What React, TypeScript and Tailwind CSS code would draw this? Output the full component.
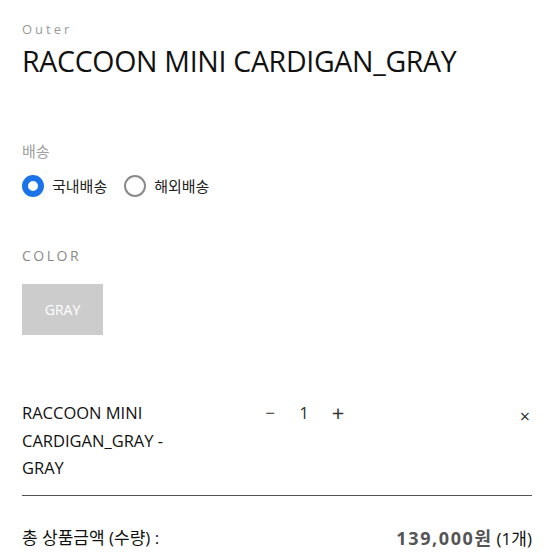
export default function App() {
  const font = { fontFamily: '"Open Sans", "Noto Sans CJK KR", sans-serif' };
  return (
    <div className="w-[554px] h-[554px] bg-white overflow-hidden pl-[22px] pr-[22px]" style={font}>
      <div className="pt-[20px] text-[13px] leading-[18px] tracking-[3px] text-[#9a9a9a]">Outer</div>
      <h1 className="mt-[6px] text-[28.5px] leading-[34px] text-[#111] tracking-[-0.3px]">RACCOON MINI CARDIGAN_GRAY</h1>

      <div className="mt-[63px] text-[15px] leading-[20px] text-[#a0a0a0]">배송</div>
      <div className="mt-[14px] flex items-center text-[15px] leading-[22px] text-[#222]">
        <label className="flex items-center gap-[8px]">
          <span className="w-[22px] h-[22px] rounded-full border-[6px] border-[#1a73e8] bg-white" />
          <span>국내배송</span>
        </label>
        <label className="ml-[17px] flex items-center gap-[8px]">
          <span className="w-[22px] h-[22px] rounded-full border-2 border-[#8a8a8a] bg-white" />
          <span>해외배송</span>
        </label>
      </div>

      <div className="mt-[49px] text-[14px] leading-[20px] tracking-[2.5px] text-[#8a8a8a]">COLOR</div>
      <div className="mt-[18px] w-[81px] h-[51px] bg-[#cccccc] flex items-center justify-center text-[14px] text-white">
        GRAY
      </div>

      <div className="mt-[64px] flex items-start pb-[13px] border-b border-[#555]">
        <div className="w-[175px] text-[16.5px] leading-[27.5px] text-[#111]">
          RACCOON MINI CARDIGAN_GRAY - GRAY
        </div>
        <div className="ml-[66px] flex items-center text-[17px] leading-[27px] text-[#333]">
          <span className="w-[14px] text-center">−</span>
          <span className="w-[54px] text-center">1</span>
          <span className="w-[14px] text-center text-[22px]">+</span>
        </div>
        <div className="ml-auto pr-[2px] pt-[4px] text-[18px] leading-[27px] text-[#333]">×</div>
      </div>

      <div className="mt-[29px] flex items-center justify-between leading-[26px]">
        <span className="text-[17px] text-[#111]">총 상품금액 (수량) :</span>
        <span className="flex items-baseline gap-[4px]">
          <span className="text-[18px] font-bold tracking-[1.6px] text-[#555]">139,000원</span>
          <span className="text-[17px] text-[#111]">(1개)</span>
        </span>
      </div>
    </div>
  );
}
